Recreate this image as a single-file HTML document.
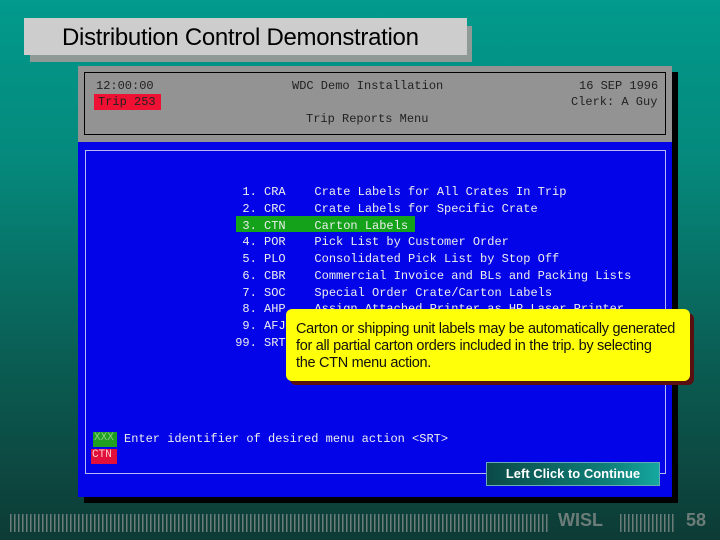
<!DOCTYPE html>
<html><head><meta charset="utf-8"><style>
*{margin:0;padding:0;box-sizing:border-box}
body{width:720px;height:540px;overflow:hidden;position:relative;font-family:"Liberation Sans",sans-serif;
background:linear-gradient(180deg,#019a8c 0%,#05897c 30%,#0a5f55 65%,#0d3b35 100%)}
.abs{position:absolute}
.mono{font-family:"Liberation Mono",monospace;font-size:12px;white-space:pre}
</style></head><body>
<div class="abs" style="left:30px;top:26px;width:442px;height:36px;background:#8f9a96"></div>
<div class="abs" style="left:24px;top:18px;width:443px;height:37px;background:#cdcdcd;font-size:24px;color:#000;padding:6px 0 0 38px;letter-spacing:-0.3px">Distribution Control Demonstration</div>

<div class="abs" style="left:84px;top:72px;width:594px;height:431px;background:#000"></div>
<div class="abs" style="left:78px;top:66px;width:594px;height:76px;background:#939393"></div>
<div class="abs" style="left:84px;top:72px;width:582px;height:63px;border:1px solid #000"></div>
<div class="abs mono" style="left:96px;top:79px;color:#222">12:00:00</div>
<div class="abs mono" style="left:94px;top:94px;width:67px;height:16px;background:#ee1133;color:#222;padding:1px 0 0 4px">Trip 253</div>
<div class="abs mono" style="left:292px;top:79px;color:#222">WDC Demo Installation</div>
<div class="abs mono" style="left:579px;top:79px;color:#222">16 SEP 1996</div>
<div class="abs mono" style="left:571px;top:95px;color:#222">Clerk: A Guy</div>
<div class="abs mono" style="left:306px;top:112px;color:#222">Trip Reports Menu</div>

<div class="abs" style="left:78px;top:142px;width:594px;height:355px;background:#0404e8"></div>
<div class="abs" style="left:85px;top:150px;width:581px;height:324px;border:1px solid #b8b8f0"></div>
<div class="abs" style="left:236px;top:216px;width:179px;height:16px;background:#14a21a"></div>
<div class="abs mono" style="left:228px;top:184px;color:#eee;line-height:16.75px">  1. CRA    Crate Labels for All Crates In Trip
  2. CRC    Crate Labels for Specific Crate
  3. CTN    Carton Labels
  4. POR    Pick List by Customer Order
  5. PLO    Consolidated Pick List by Stop Off
  6. CBR    Commercial Invoice and BLs and Packing Lists
  7. SOC    Special Order Crate/Carton Labels
  8. AHP    Assign Attached Printer as HP Laser Printer
  9. AFJ
 99. SRT</div>

<div class="abs" style="left:290px;top:313px;width:404px;height:72px;border-radius:6px;background:#5a1010"></div>
<div class="abs" style="left:286px;top:309px;width:404px;height:72px;border-radius:6px;background:#ffff0a;color:#111;font-size:14.5px;line-height:17px;padding:12px 0 0 10px;letter-spacing:-0.3px;white-space:nowrap">Carton or shipping unit labels may be automatically generated<br>for all partial carton orders included in the trip. by selecting<br>the CTN menu action.</div>

<div class="abs mono" style="left:93px;top:432px;width:24px;height:15px;background:#20a020;color:#8c8;padding:0 0 0 1px;font-size:11px">XXX</div>
<div class="abs mono" style="left:124px;top:432px;color:#eee">Enter identifier of desired menu action &lt;SRT&gt;</div>
<div class="abs mono" style="left:91px;top:449px;width:26px;height:15px;background:#e0103a;color:#fcc;padding:0 0 0 1px;font-size:11px">CTN</div>

<div class="abs" style="left:486px;top:462px;width:174px;height:24px;border:1px solid #6ab;background:linear-gradient(90deg,#0b4a48,#0f7f78 70%,#14a8a0);color:#fff;font-weight:bold;font-size:13px;text-align:center;line-height:22px">Left Click to Continue</div>

<div class="abs" style="left:10px;top:514px;width:538px;height:18px;background:repeating-linear-gradient(90deg,#6c7c78 0 1.5px,transparent 1.5px 4px)"></div>
<div class="abs" style="left:558px;top:510px;color:#6c7c78;font-weight:bold;font-size:18px">WISL</div>
<div class="abs" style="left:620px;top:514px;width:56px;height:18px;background:repeating-linear-gradient(90deg,#6c7c78 0 1.5px,transparent 1.5px 4px)"></div>
<div class="abs" style="left:686px;top:510px;color:#6c7c78;font-weight:bold;font-size:18px">58</div>
</body></html>
